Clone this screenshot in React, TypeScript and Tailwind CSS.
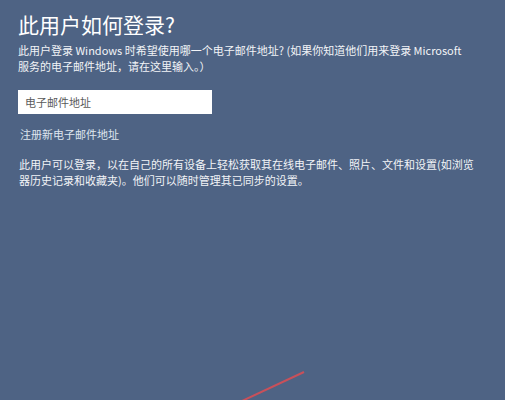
const font = "font-['Noto_Sans_CJK_SC','Noto_Sans',sans-serif]";

export default function App() {
    return (
        <div className={`relative w-[505px] h-[400px] overflow-hidden bg-[#4e6384] text-white ${font}`}>
            <div className="pl-[18px] pt-[9px]">
                <h1 className="text-[21px] leading-[30px] font-normal">此用户如何登录?</h1>
                <p className="mt-[3px] text-[11px] leading-[16px] text-[#f2f4f7] whitespace-nowrap">
                    此用户登录 Windows 时希望使用哪一个电子邮件地址? (如果你知道他们用来登录 Microsoft
                    <br />
                    服务的电子邮件地址，请在这里输入。）
                </p>
                <div className="mt-[16px] w-[194px] h-[24px] bg-white flex items-center px-[7px]">
                    <span className="text-[11px] text-[#5a5a5a]">电子邮件地址</span>
                </div>
                <p className="mt-[12px] pl-[2px] text-[11px] leading-[16px] text-[#dfe6ef]">注册新电子邮件地址</p>
                <p className="mt-[14px] pl-[1px] text-[11px] leading-[16px] text-[#f2f4f7] whitespace-nowrap">
                    此用户可以登录，以在自己的所有设备上轻松获取其在线电子邮件、照片、文件和设置(如浏览
                    <br />
                    器历史记录和收藏夹)。他们可以随时管理其已同步的设置。
                </p>
            </div>
            <svg className="absolute left-0 top-0" width="505" height="400">
                <line x1="242" y1="401" x2="304" y2="372" stroke="#c8505a" strokeWidth="2" />
            </svg>
        </div>
    );
}
